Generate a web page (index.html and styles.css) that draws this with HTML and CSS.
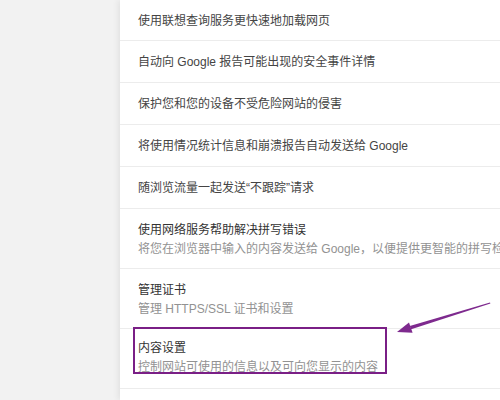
FILE: index.html
```html
<!DOCTYPE html>
<html lang="zh-CN">
<head>
<meta charset="utf-8">
<link rel="stylesheet" href="styles.css">
</head>
<body>
<div class="page">
  <div class="side"></div>
  <div class="panel">
    <div class="row first">使用联想查询服务更快速地加载网页</div>
    <div class="row">自动向 Google 报告可能出现的安全事件详情</div>
    <div class="row">保护您和您的设备不受危险网站的侵害</div>
    <div class="row">将使用情况统计信息和崩溃报告自动发送给 Google</div>
    <div class="row">随浏览流量一起发送“不跟踪”请求</div>
    <div class="row two">
      <div class="title">使用网络服务帮助解决拼写错误</div>
      <div class="sub">将您在浏览器中输入的内容发送给 Google，以便提供更智能的拼写检查</div>
    </div>
    <div class="row two">
      <div class="title">管理证书</div>
      <div class="sub">管理 HTTPS/SSL 证书和设置</div>
    </div>
    <div class="row two highlight">
      <div class="title">内容设置</div>
      <div class="sub">控制网站可使用的信息以及可向您显示的内容</div>
      <div class="box"></div>
    </div>
    <div class="row last"></div>
    <svg class="arrow" width="380" height="400" viewBox="120 0 380 400">
      <polygon points="490,302.6 490.4,303.6 411.2,329.3 409.8,325.9" fill="#7e2a8e"/>
      <polygon points="397,332 409,322.6 412.6,332.8" fill="#7e2a8e"/>
    </svg>
  </div>
</div>
</body>
</html>
```

FILE: styles.css
```css
html, body {
  margin: 0;
  padding: 0;
}
body {
  width: 500px;
  height: 400px;
  overflow: hidden;
  background: #f2f2f2;
  font-family: "Liberation Sans", "Noto Sans CJK SC", sans-serif;
  font-size: 12px;
}
.page {
  display: flex;
  height: 400px;
}
.side {
  width: 120px;
  flex: none;
  background: #f2f2f2;
}
.panel {
  position: relative;
  flex: 1;
  background: #fff;
  box-shadow: -2px 0 6px rgba(0, 0, 0, 0.07);
  overflow: hidden;
}
.row {
  position: relative;
  height: 39px;
  line-height: 39px;
  padding-top: 2px;
  padding-left: 18px;
  border-bottom: 1px solid #ececec;
  color: #444;
  white-space: nowrap;
}
.row.first {
  height: 38px;
}
.row.two {
  height: auto;
  line-height: 19px;
  padding-top: 12px;
  padding-bottom: 9px;
}
.row.highlight {
  padding-top: 10px;
  padding-bottom: 11px;
}
.title {
  color: #333;
}
.sub {
  color: #929292;
}
.box {
  position: absolute;
  left: 13px;
  top: -2px;
  width: 250px;
  height: 43px;
  border: 2px solid #7a1f86;
}
.arrow {
  position: absolute;
  left: 0;
  top: 0;
}
```
